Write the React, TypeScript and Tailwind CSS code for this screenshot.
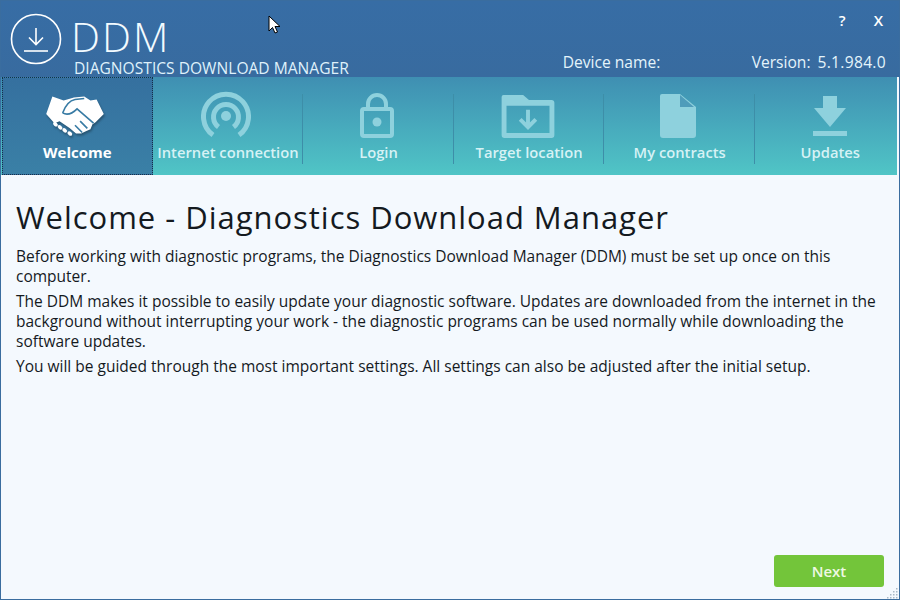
const FONT = "font-['Open_Sans','Noto_Sans',sans-serif]"

const HandshakeIcon = () => (
  <svg width="72" height="52" viewBox="0 0 70 50" className="mb-[-2px] mr-[5px] drop-shadow-[1px_2px_1px_rgba(0,0,0,0.3)]">
    <path
      d="M13 6 L24 10 L34 7 L44 6 L50 10 L56 9 L63 23 L55 31 L52 33 L50 38 L45 40 L41 42 L36 42 L30 37 L20 30 L15 32 L7 23 Z"
      fill="white"
    />
    <path
      d="M23 22 C26 14 30 10 35 9 L44 8 M23 22 C28 25 33 22 37 18 L53 32 M47 37 L40 30 M42 41 L35 34"
      fill="none"
      stroke="#387ba4"
      strokeWidth="1.6"
    />
    <g fill="white">
      <ellipse cx="16" cy="33" rx="2.6" ry="1.8" transform="rotate(40 16 33)" />
      <ellipse cx="20.5" cy="36" rx="2.6" ry="1.8" transform="rotate(40 20.5 36)" />
      <ellipse cx="25" cy="39" rx="2.6" ry="1.8" transform="rotate(40 25 39)" />
      <ellipse cx="30" cy="42" rx="2.6" ry="1.8" transform="rotate(40 30 42)" />
    </g>
  </svg>
)

const WifiIcon = () => (
  <svg width="50" height="48" viewBox="0 0 50 48" fill="none" stroke="#8ed1dd" className="mr-[3px]">
    <path d="M12 44 A22.5 22.5 0 1 1 38 44" strokeWidth="5" />
    <path d="M17.5 36 A12.5 12.5 0 1 1 32.5 36" strokeWidth="5" />
    <circle cx="25" cy="25" r="5" fill="#8ed1dd" stroke="none" />
  </svg>
)

const LockIcon = () => (
  <svg width="36" height="46" viewBox="0 0 36 46" fill="none" className="mb-[1px] mr-[2px]">
    <path d="M9 18 V12 A9 9 0 0 1 27 12 V18" stroke="#8ed1dd" strokeWidth="4" />
    <rect x="3" y="17" width="30" height="27" rx="2" stroke="#8ed1dd" strokeWidth="4" />
    <circle cx="18" cy="30" r="4.5" fill="#8ed1dd" />
  </svg>
)

const FolderIcon = () => (
  <svg width="54" height="43" viewBox="0 0 54 44" className="mb-[1px] mr-[3px]">
    <path
      fillRule="evenodd"
      d="M2 0 H22 L28 5 H51 A3 3 0 0 1 54 8 V41 A3 3 0 0 1 51 44 H3 A3 3 0 0 1 0 41 V2 A2 2 0 0 1 2 0 Z M5 11 V39 H49 V11 Z"
      fill="#8ed1dd"
    />
    <path d="M27 15 V33 M19 25 L27 33 L35 25" fill="none" stroke="#8ed1dd" strokeWidth="4" />
  </svg>
)

const DocIcon = () => (
  <svg width="36" height="44" viewBox="0 0 36 44" className="mb-[1px] mr-[3px]">
    <path d="M2 0 H20 L36 13 V41 A3 3 0 0 1 33 44 H3 A3 3 0 0 1 0 41 V2 A2 2 0 0 1 2 0 Z" fill="#8ed1dd" />
    <path d="M20 1 L34 13 H20 Z" fill="#4f9cba" />
  </svg>
)

const UpdatesIcon = () => (
  <svg width="34" height="40" viewBox="0 0 34 40" fill="#8ed1dd" className="mb-[3px]">
    <path d="M10 0 H24 V12 H33 L17 31 L1 12 H10 Z" />
    <rect x="0" y="35" width="34" height="5" />
  </svg>
)

const tabs = [
  { label: "Welcome", icon: <HandshakeIcon />, active: true },
  { label: "Internet connection", icon: <WifiIcon /> },
  { label: "Login", icon: <LockIcon /> },
  { label: "Target location", icon: <FolderIcon /> },
  { label: "My contracts", icon: <DocIcon /> },
  { label: "Updates", icon: <UpdatesIcon /> },
]

export default function App() {
  return (
    <div className={`relative flex h-[600px] w-[900px] flex-col overflow-hidden border border-[#3a6d9f] bg-[#f4f9fe] ${FONT}`}>
      {/* title bar */}
      <div className="relative flex h-[76px] shrink-0 bg-gradient-to-b from-[#376da5] to-[#386b9f] text-white">
        <svg width="76" height="76" viewBox="0 0 76 76" fill="none" stroke="white" className="shrink-0">
          <circle cx="35" cy="38" r="24.5" strokeWidth="1.6" />
          <path d="M35 27 V43 M28 36.5 L35 43.5 L42 36.5" strokeWidth="1.6" />
          <path d="M23 50 H47" strokeWidth="1.6" />
        </svg>
        <div className="ml-[-4px] flex flex-col">
          <div className="ml-[-2px] mt-[15px] h-[41px] text-[41px] font-light leading-[41px] tracking-[2px] text-[#f3fbff]">DDM</div>
          <div className="ml-px mt-[2px] whitespace-nowrap text-[15.6px] leading-[18px] text-[#dff1fb]">DIAGNOSTICS DOWNLOAD MANAGER</div>
        </div>
        <div className="ml-auto flex flex-col items-end pr-[13px]">
          <div className="mt-[9px] flex gap-[28px] pr-[3px] text-[15px] font-semibold leading-5">
            <span>?</span>
            <span>X</span>
          </div>
          <div className="mt-[22px] flex text-[15.6px] font-medium leading-5 text-[#e4f4fb]">
            <span className="w-[189px]">Device name:</span>
            <span className="mr-[7px]">Version:</span>
            <span className="tracking-[0.3px]">5.1.984.0</span>
          </div>
        </div>
      </div>

      {/* step tabs */}
      <div className="mr-[2px] grid h-[98px] shrink-0 grid-cols-[repeat(6,150.6px)] overflow-hidden bg-gradient-to-b from-[#3f8fb2] to-[#50c5c6] pl-px">
        {tabs.map((tab, i) => (
          <div
            key={tab.label}
            className={`relative flex flex-col items-center ${
              tab.active ? "border border-dotted border-[#14304a] bg-gradient-to-b from-[#35709f] to-[#3a80a6]" : ""
            }`}
          >
            {i > 0 && i < 5 && <span className="absolute bottom-[11px] right-0 top-[17px] w-px bg-[#3d8ea8]" />}
            <div className="flex h-[62px] w-full items-end justify-center">{tab.icon}</div>
            <div
              className={`whitespace-nowrap leading-5 ${
                tab.active ? "mt-[2px] text-[15px] font-bold text-white" : "mt-[3px] text-[14.75px] font-semibold text-[#d6f2f5]"
              }`}
            >
              {tab.label}
            </div>
          </div>
        ))}
      </div>

      {/* content */}
      <div className="relative flex-1 px-[15px] text-[#141a1f]">
        <h1 className="mt-[22px] text-[31px] font-normal leading-10 tracking-[0.97px]">Welcome - Diagnostics Download Manager</h1>
        <div className="mt-[9px] flex flex-col gap-[5px] text-[15.5px] leading-[20px]">
          <p>Before working with diagnostic programs, the Diagnostics Download Manager (DDM) must be set up once on this computer.</p>
          <p>The DDM makes it possible to easily update your diagnostic software. Updates are downloaded from the internet in the background without interrupting your work - the diagnostic programs can be used normally while downloading the software updates.</p>
          <p>You will be guided through the most important settings. All settings can also be adjusted after the initial setup.</p>
        </div>
        <button className="absolute bottom-[12px] right-[15px] h-[32px] w-[110px] rounded-[3px] bg-[#73c53a] text-[15px] font-semibold text-[#eef9e4]">
          Next
        </button>
        {/* resize grip */}
        <svg width="12" height="12" viewBox="0 0 12 12" fill="#a9b9c6" className="absolute bottom-0 right-0">
          <rect x="9" y="1" width="1.5" height="1.5" />
          <rect x="6" y="4" width="1.5" height="1.5" />
          <rect x="9" y="4" width="1.5" height="1.5" />
          <rect x="3" y="7" width="1.5" height="1.5" />
          <rect x="6" y="7" width="1.5" height="1.5" />
          <rect x="9" y="7" width="1.5" height="1.5" />
          <rect x="0" y="10" width="1.5" height="1.5" />
          <rect x="3" y="10" width="1.5" height="1.5" />
          <rect x="6" y="10" width="1.5" height="1.5" />
          <rect x="9" y="10" width="1.5" height="1.5" />
        </svg>
      </div>

      {/* mouse cursor */}
      <svg width="13" height="20" viewBox="0 0 13 20" className="absolute left-[267px] top-[14px]">
        <path d="M1 1 V16 L4.5 12.5 L7 18 L9.5 17 L7 11.5 H12 Z" fill="white" stroke="black" strokeWidth="1" />
      </svg>
    </div>
  )
}
